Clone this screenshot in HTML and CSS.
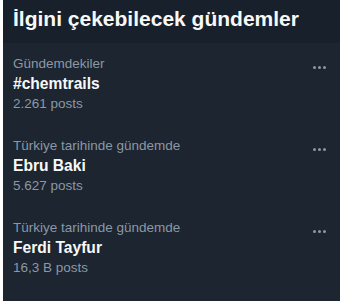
FILE: index.html
```html
<!DOCTYPE html>
<html lang="tr">
<head>
  <meta charset="UTF-8">
  <title>Gündemler</title>
  <link rel="stylesheet" href="styles.css">
</head>
<body>

<div class="panel">
  <h2 class="panel-title">İlgini çekebilecek gündemler</h2>

  <div class="trend">
    <div class="trend-text">
      <div class="trend-meta">Gündemdekiler</div>
      <div class="trend-name">#chemtrails</div>
      <div class="trend-count">2.261 posts</div>
    </div>
    <div class="more"><span></span><span></span><span></span></div>
  </div>

  <div class="trend">
    <div class="trend-text">
      <div class="trend-meta">Türkiye tarihinde gündemde</div>
      <div class="trend-name">Ebru Baki</div>
      <div class="trend-count">5.627 posts</div>
    </div>
    <div class="more"><span></span><span></span><span></span></div>
  </div>

  <div class="trend">
    <div class="trend-text">
      <div class="trend-meta">Türkiye tarihinde gündemde</div>
      <div class="trend-name">Ferdi Tayfur</div>
      <div class="trend-count">16,3 B posts</div>
    </div>
    <div class="more"><span></span><span></span><span></span></div>
  </div>
</div>

</body>
</html>
```

FILE: styles.css
```css
body {
  margin: 0;
  background: #fff;
  font-family: "Liberation Sans", "Noto Sans", sans-serif;
}

.panel {
  margin: 0 3px;
  height: 301px;
  background: #1c2530;
  overflow: hidden;
}

.panel-title {
  margin: 0;
  height: 43px;
  box-sizing: border-box;
  padding: 4px 10px 0;
  background: #17202b;
  color: #f7f9f9;
  font-size: 21px;
  font-weight: 800;
  line-height: 30px;
}

.trend {
  display: flex;
  justify-content: space-between;
  height: 82px;
  box-sizing: border-box;
  padding: 11px 10px 0;
}

.trend-meta,
.trend-count {
  color: #8b98a5;
  font-size: 13.5px;
  line-height: 20px;
}

.trend-name {
  color: #f7f9f9;
  font-size: 15.6px;
  font-weight: 700;
  line-height: 20px;
}

.more {
  display: flex;
  gap: 2px;
  margin-top: 12px;
  margin-right: 4px;
}

.more span {
  width: 3px;
  height: 3px;
  border-radius: 50%;
  background: #8b98a5;
}
```
